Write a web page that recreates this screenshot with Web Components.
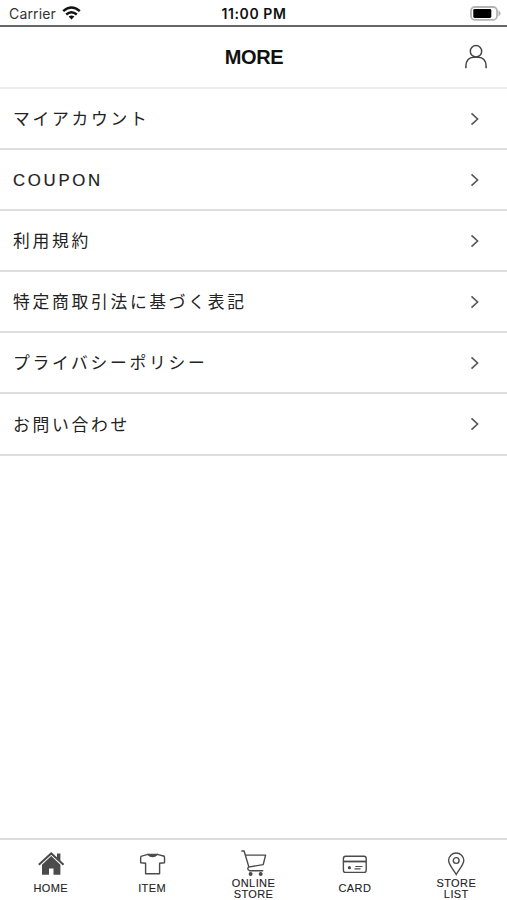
<!DOCTYPE html>
<html lang="ja">
<head>
<meta charset="utf-8">
<title>MORE</title>
<style>
html, body { margin: 0; height: 100%; }
body { background: #fff; color: #222; font-family: "Liberation Sans", "Noto Sans CJK JP", sans-serif; }
</style>
</head>
<body>
<more-screen></more-screen>
<script>
class BaseElement extends HTMLElement {
  render(css, html) {
    this.attachShadow({ mode: "open" }).innerHTML = `<style>*{box-sizing:border-box}${css}</style>${html}`;
  }
}

customElements.define("status-bar", class extends BaseElement {
  connectedCallback() {
    this.render(`
      :host { display: grid; grid-template-columns: 1fr auto 1fr; align-items: center; box-sizing: border-box; height: 27px; padding: 1px 6px 0 9px; border-bottom: 2px solid #666; font-family: Inter, sans-serif; }
      .left { display: flex; align-items: center; gap: 6px; font-size: 14px; letter-spacing: .15px; color: #333; }
      .time { font-size: 14px; font-weight: 600; color: #111; letter-spacing: .6px; margin-right: 2px; }
      .right { display: flex; justify-content: flex-end; }
      svg { display: block; }`, `
      <div class="left"><span>Carrier</span>
        <svg width="19" height="14" viewBox="0 0 19 14" fill="none" stroke="#111" stroke-width="2.5">
          <path d="M1.2 5.1Q9.5-2 17.8 5.1M4.2 8.5q5.3-4.5 10.6 0"/><path d="M6.6 10.6q2.9-2.2 5.8 0L9.5 13.6z" fill="#111" stroke="none"/>
        </svg></div>
      <div class="time">11:00 PM</div>
      <div class="right"><svg width="31" height="15" viewBox="0 0 31 15">
        <rect x="1" y="1" width="26" height="12.8" rx="3.8" fill="#fff" stroke="#b4b4b4" stroke-width="1.8"/>
        <rect x="3.3" y="3" width="18" height="8.9" rx="1.3" fill="#000"/>
        <path d="M28.4 4.3q4.4 3.1 0 6.2z" fill="#b4b4b4"/></svg></div>`);
  }
});

customElements.define("page-header", class extends BaseElement {
  connectedCallback() {
    this.render(`
      :host { display: grid; grid-template-columns: 1fr auto 1fr; align-items: center; box-sizing: border-box; height: 62px; padding: 0 19px 0 20px; border-bottom: 2px solid #ededed; }
      h1 { grid-column: 2; margin: 0; font-size: 20px; line-height: 24px; letter-spacing: -.4px; color: #111; }
      svg { justify-self: end; display: block; }`, `
      <h1><slot></slot></h1>
      <svg width="24" height="26" viewBox="0 0 24 26" fill="none" stroke="#444" stroke-width="1.5">
        <circle cx="12" cy="7.3" r="5.7"/><path d="M1.9 24.2v-2.2C1.9 16.5 5.3 13.3 9.4 13.3h5.2c4.1 0 7.5 3.2 7.5 8.7v2.2"/></svg>`);
  }
});

customElements.define("menu-row", class extends BaseElement {
  connectedCallback() {
    this.render(`
      :host { display: flex; align-items: center; justify-content: space-between; box-sizing: border-box; height: 61.1px; padding: 0 27px 0 13px; border-bottom: 2px solid #dedede; font-size: 16.8px; letter-spacing: 2.7px; line-height: 24px; }
      span { padding-top: 3px; }
      :host([latin]) span { padding-top: 2px; -webkit-text-stroke: .2px; }
      svg { display: block; }`, `
      <span><slot></slot></span>
      <svg width="10" height="14" viewBox="0 0 10 14" fill="none" stroke="#555" stroke-width="1.6"><path d="M1.5 1.3 7.6 7l-6.1 5.7"/></svg>`);
  }
});

const icons = {
  home: `<path d="M1.8 14.8 14.2 3.4l12.4 11.4" fill="none" stroke="#4b4b4b" stroke-width="2"/><path d="M20 3.5h3.4v7.6L20 8z" fill="#4b4b4b"/><path d="M14.2 6.1 5 14.7v10h7v-6.2h4.5v6.2h6.9v-10z" fill="#4b4b4b"/>`,
  item: `<path d="M9.8 4.4 2.9 6.3Q2.3 9.3 2.7 12.7l4.9.6V23.7h14V13.3l4.9-.6q.4-3.4-.2-6.4L19.3 4.4Q14.6 8.5 9.8 4.4z" fill="none" stroke="#4b4b4b" stroke-width="1.4" stroke-linejoin="round"/><path d="M9.4 3.8h10.3q-5.1 6.4-10.3 0z" fill="#4b4b4b"/>`,
  cart: `<g fill="none" stroke="#4b4b4b" stroke-width="1.4" stroke-linejoin="round"><path d="M2.3 1h2.8L10 17.4M6.5 5.1H26.6L24.2 14.6 9.4 17.1Q7.8 19.4 10.4 20.7H24.2"/></g><circle cx="11.6" cy="24" r="2" fill="#4b4b4b"/><circle cx="21.7" cy="24" r="2" fill="#4b4b4b"/>`,
  card: `<rect x="2.4" y="6.2" width="22.8" height="16.2" rx="2.2" fill="none" stroke="#4b4b4b" stroke-width="1.4"/><path d="M2.4 11.5h22.8" stroke="#4b4b4b" stroke-width="1.8"/><circle cx="8.4" cy="17.7" r="1.6" fill="#4b4b4b"/><path d="M14.3 16.5h7.2M13.5 18.9h6" stroke="#4b4b4b" stroke-width="1.2"/>`,
  pin: `<path d="M14.2 24.5C12 20.5 6.6 14.8 6.6 10.3a7.6 7.3 0 0 1 15.2 0C21.8 14.8 16.4 20.5 14.2 24.5z" fill="none" stroke="#4b4b4b" stroke-width="1.4"/><circle cx="14.2" cy="10.5" r="2.9" fill="none" stroke="#4b4b4b" stroke-width="1.4"/>`
};

customElements.define("tab-item", class extends BaseElement {
  connectedCallback() {
    const two = this.hasAttribute("two-line");
    this.render(`
      :host { display: flex; flex-direction: column; align-items: center; padding-top: 10px; font-size: 11px; line-height: 11px; letter-spacing: .4px; text-align: center; }
      svg { display: block; }
      span { display: block; margin-top: ${two ? 1 : 6}px; -webkit-text-stroke: .1px; }`, `
      <svg width="28" height="27" viewBox="0 0 28 27">${icons[this.getAttribute("icon")]}</svg>
      <span><slot></slot></span>`);
  }
});

customElements.define("tab-bar", class extends BaseElement {
  connectedCallback() {
    this.render(`:host { display: grid; grid-template-columns: repeat(5, 1fr); box-sizing: border-box; height: 62px; border-top: 2px solid #dcdcdc; }`, `<slot></slot>`);
  }
});

customElements.define("more-screen", class extends BaseElement {
  connectedCallback() {
    this.render(`
      :host { display: flex; flex-direction: column; height: 900px; width: 507px; overflow: hidden; background: #fff; }
      main { flex: 1; }
      tab-bar { flex: none; }`, `
      <status-bar></status-bar>
      <page-header>MORE</page-header>
      <main>
        <menu-row>マイアカウント</menu-row>
        <menu-row latin>COUPON</menu-row>
        <menu-row>利用規約</menu-row>
        <menu-row>特定商取引法に基づく表記</menu-row>
        <menu-row>プライバシーポリシー</menu-row>
        <menu-row>お問い合わせ</menu-row>
      </main>
      <tab-bar>
        <tab-item icon="home">HOME</tab-item>
        <tab-item icon="item">ITEM</tab-item>
        <tab-item icon="cart" two-line>ONLINE<br>STORE</tab-item>
        <tab-item icon="card">CARD</tab-item>
        <tab-item icon="pin" two-line>STORE<br>LIST</tab-item>
      </tab-bar>`);
  }
});
</script>
</body>
</html>
